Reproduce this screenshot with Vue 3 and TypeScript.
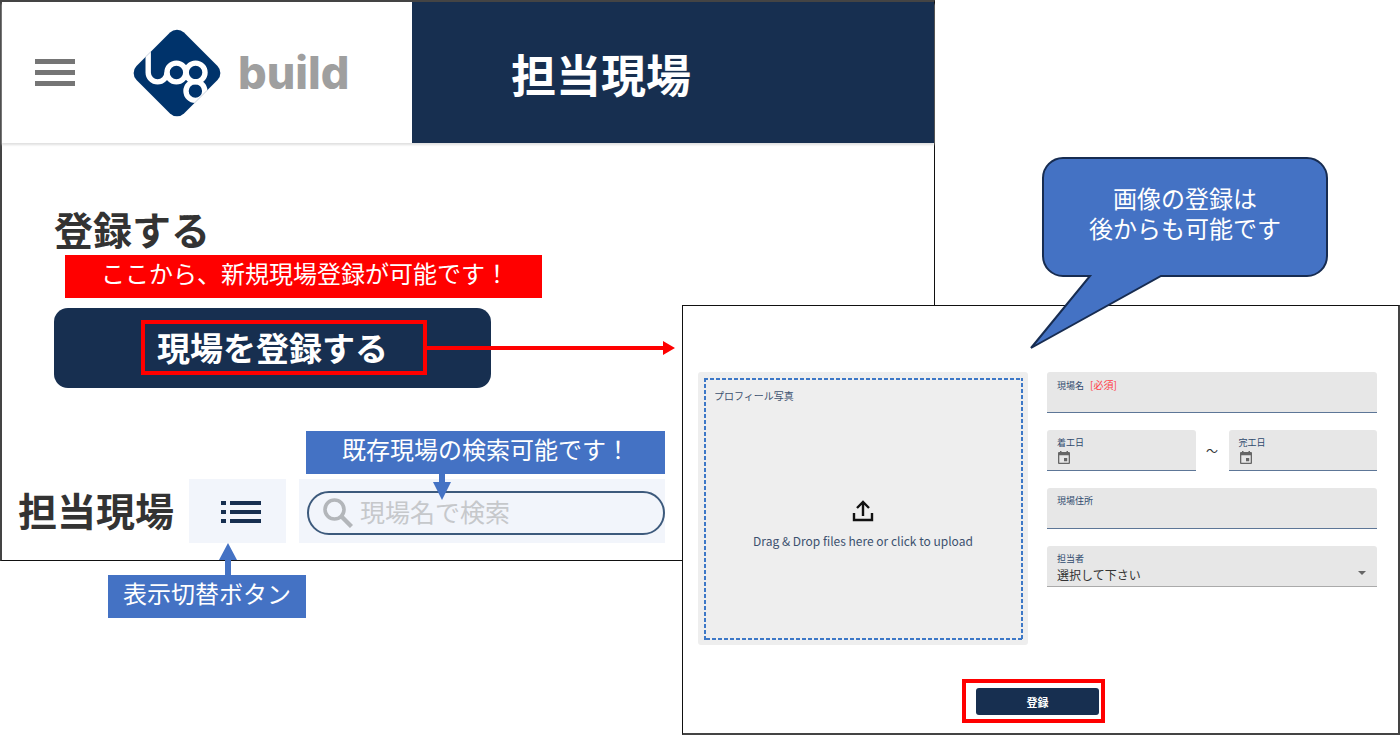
<script setup lang="ts">
import { ref } from 'vue'

const keyword = ref('')
const siteName = ref('')
const startDate = ref('')
const endDate = ref('')
const address = ref('')
const manager = ref('')
</script>

<template>
  <div class="page">
    <main class="panel sites">
      <header class="header">
        <div class="brand">
          <button class="icon-button menu" type="button" aria-label="メニュー">
            <svg width="40" height="28" viewBox="0 0 40 28" fill="#757575">
              <rect y="0" width="40" height="5" />
              <rect y="11" width="40" height="5" />
              <rect y="22" width="40" height="5" />
            </svg>
          </button>
          <a class="logo" href="#">
            <svg width="88" height="88" viewBox="0 0 88 88">
              <defs>
                <clipPath id="diamond">
                  <path d="M37 3.500a10 10 0 0 1 14 0L84.500 37a10 10 0 0 1 0 14L51 84.500a10 10 0 0 1-14 0L3.500 51a10 10 0 0 1 0-14Z" />
                </clipPath>
              </defs>
              <g clip-path="url(#diamond)">
                <rect width="88" height="88" fill="#00336b" />
                <g fill="none" stroke="#fff" stroke-width="5.400">
                  <path d="M15.200 16V43.500a9.400 9.400 0 0 0 18.800 0" />
                  <circle cx="43.400" cy="43.500" r="9.400" />
                  <circle cx="62.600" cy="43.500" r="9.400" />
                  <circle cx="62.400" cy="62" r="9.400" />
                </g>
              </g>
            </svg>
            <span class="logo-name">build</span>
          </a>
        </div>
        <h1 class="title">担当現場</h1>
      </header>

      <section class="register">
        <h2 class="heading">登録する</h2>
        <p class="note note-red">ここから、新規現場登録が可能です！</p>
        <button class="register-button" type="button">
          現場を登録する
          <span class="focus-frame"></span>
          <svg class="arrow-right" width="248" height="14" viewBox="0 0 248 14" fill="#f00">
            <path d="M0 5h236V0l12 7-12 7V9H0Z" />
          </svg>
        </button>
      </section>

      <section class="toolbar">
        <h2 class="heading">担当現場</h2>
        <div class="switcher">
          <button class="icon-button" type="button" aria-label="表示切替">
            <svg width="40" height="24" viewBox="0 0 40 24" fill="#172f50">
              <path d="M0 1h5v4H0ZM9 1h31v4H9ZM0 10h5v4H0ZM9 10h31v4H9ZM0 19h5v4H0ZM9 19h31v4H9Z" />
            </svg>
          </button>
          <div class="switcher-note">
            <svg width="18" height="32" viewBox="0 0 18 32" fill="#4472c4">
              <path d="M9 0l9 17h-6v15H6V17H0Z" />
            </svg>
            <p class="note">表示切替ボタン</p>
          </div>
        </div>
        <div class="search">
          <label class="search-box">
            <svg width="30" height="30" viewBox="0 0 30 30" fill="none" stroke="#b3b6ba">
              <circle cx="11.500" cy="11.500" r="9.500" stroke-width="3.600" />
              <path d="M18 18l10.500 10.500" stroke-width="4.400" />
            </svg>
            <input v-model="keyword" type="search" placeholder="現場名で検索" aria-label="現場名で検索" />
          </label>
          <div class="search-note">
            <p class="note">既存現場の検索可能です！</p>
            <svg width="18" height="26" viewBox="0 0 18 26" fill="#4472c4">
              <path d="M6 0h6v8h6L9 26 0 8h6Z" />
            </svg>
          </div>
        </div>
      </section>
    </main>

    <form class="panel entry" @submit.prevent>
      <aside class="bubble">
        <svg width="302" height="196" viewBox="0 0 302 196">
          <path
            d="M34 2H278a20 20 0 0 1 20 20V100a20 20 0 0 1-20 20H132L2 192L61 120H34a20 20 0 0 1-20-20V22a20 20 0 0 1 20-20Z"
            fill="#4472c4"
            stroke="#172c51"
            stroke-width="2"
          />
        </svg>
        <p class="bubble-text">画像の登録は<br />後からも可能です</p>
      </aside>

      <div class="columns">
        <label class="upload">
          <svg class="dashes" width="100%" height="100%">
            <rect width="100%" height="100%" fill="none" stroke="#3d78c7" stroke-width="4" stroke-dasharray="4 2" />
          </svg>
          <span class="upload-label">プロフィール写真</span>
          <span class="upload-hint">
            <svg width="22" height="22" viewBox="0 0 22 22" fill="none" stroke="#111" stroke-width="2.400">
              <path d="M11 16V2.500M5 8l6-6 6 6M2 13v7h18v-7" />
            </svg>
            Drag &amp; Drop files here or click to upload
          </span>
          <input class="file" type="file" />
        </label>

        <div class="fields">
          <label class="field">
            <span class="field-label">現場名 <span class="required">[必須]</span></span>
            <input v-model="siteName" type="text" />
          </label>
          <div class="dates">
            <label class="field">
              <span class="field-label">着工日</span>
              <span class="date-value">
                <svg width="12" height="13" viewBox="0 0 12 13" fill="#666">
                  <path fill-rule="evenodd" d="M2 0h1.500v1h5V0H10v1h1a1 1 0 0 1 1 1v10a1 1 0 0 1-1 1H1a1 1 0 0 1-1-1V2a1 1 0 0 1 1-1h1ZM1.300 4.300v7.400h9.400V4.300ZM6 7h3.200v3.200H6Z" />
                </svg>
                <input v-model="startDate" type="text" />
              </span>
            </label>
            <span class="tilde">～</span>
            <label class="field">
              <span class="field-label">完工日</span>
              <span class="date-value">
                <svg width="12" height="13" viewBox="0 0 12 13" fill="#666">
                  <path fill-rule="evenodd" d="M2 0h1.500v1h5V0H10v1h1a1 1 0 0 1 1 1v10a1 1 0 0 1-1 1H1a1 1 0 0 1-1-1V2a1 1 0 0 1 1-1h1ZM1.300 4.300v7.400h9.400V4.300ZM6 7h3.200v3.200H6Z" />
                </svg>
                <input v-model="endDate" type="text" />
              </span>
            </label>
          </div>
          <label class="field">
            <span class="field-label">現場住所</span>
            <input v-model="address" type="text" />
          </label>
          <label class="field select-field">
            <span class="field-label">担当者</span>
            <select v-model="manager">
              <option value="">選択して下さい</option>
            </select>
            <svg class="caret" width="8" height="4" viewBox="0 0 8 4" fill="#666"><path d="M0 0h8L4 4Z" /></svg>
          </label>
        </div>
      </div>

      <div class="actions">
        <div class="submit-frame">
          <button class="submit" type="submit">登録</button>
        </div>
      </div>
    </form>
  </div>
</template>

<style>
body {
  margin: 0;
  background: #fff;
}
</style>

<style scoped>
.page,
.page * {
  box-sizing: border-box;
}

.page {
  display: grid;
  grid-template-columns: 682fr 253fr 465fr;
  align-items: start;
  font-family: "Noto Sans CJK JP", "Noto Sans", sans-serif;
  color: #333;
}

.page svg {
  display: block;
  flex: none;
}

h1,
h2,
p {
  margin: 0;
}

button,
input,
select {
  font: inherit;
  color: inherit;
  border: 0;
  padding: 0;
  background: none;
  outline: 0;
}

input,
select {
  width: 100%;
  min-width: 0;
}

.panel {
  background: #fff;
}

.sites {
  grid-area: 1 / 1 / 2 / 3;
  border: 1px solid #111;
  border-top: 2px solid #444;
  border-left: 2px solid #444;
  padding-bottom: 17px;
}

.header {
  display: flex;
  box-shadow: 0 2px 2px #e0e0e0;
}

.brand {
  display: flex;
  align-items: center;
  width: 44%;
  padding-left: 33px;
}

.icon-button {
  display: flex;
  align-items: center;
  justify-content: center;
  cursor: pointer;
}

.logo {
  display: flex;
  align-items: center;
  gap: 17px;
  margin-left: 58px;
  text-decoration: none;
}

.logo-name {
  font: 800 45px/60px Inter, sans-serif;
  color: #9f9f9f;
}

.title {
  flex: 1;
  padding: 3px 0 0 99px;
  background: #172f50;
  color: #fff;
  font-size: 45px;
  line-height: 138px;
}

.register {
  padding: 65px 52px 0;
}

.heading {
  padding-bottom: 4px;
  font-size: 39px;
  line-height: 40px;
  white-space: nowrap;
}

.note {
  padding: 0 36px 8px;
  background: #4472c4;
  color: #fff;
  font-size: 24px;
  line-height: 35px;
  text-align: center;
  white-space: nowrap;
}

.note-red {
  width: 477px;
  margin: 3px 0 10px 11px;
  background: #f00;
}

.register-button {
  position: relative;
  display: block;
  width: 437px;
  height: 80px;
  padding-bottom: 2px;
  border-radius: 14px;
  background: #172f50;
  color: #fff;
  font-size: 33px;
  font-weight: 700;
}

.focus-frame {
  position: absolute;
  inset: 12px 64px 13px 87px;
  border: 4px solid #f00;
}

.arrow-right {
  position: absolute;
  top: 33px;
  left: 373px;
}

.toolbar {
  display: flex;
  align-items: center;
  width: 71%;
  height: 64px;
  margin-top: 91px;
  padding-left: 16px;
}

.switcher {
  position: relative;
  align-self: stretch;
  display: flex;
  justify-content: center;
  width: 97px;
  margin: 0 13px 0 15px;
  padding: 2px 0 0 6px;
  background: #f2f5fb;
}

.switcher-note {
  position: absolute;
  top: 64px;
  left: -81px;
}

.switcher-note svg {
  margin-left: 111px;
}

.switcher-note .note {
  width: 198px;
  padding: 0 0 8px;
}

.search {
  position: relative;
  align-self: stretch;
  flex: 1;
  margin-right: -1px;
  padding: 12px 0 8px 8px;
  background: #f2f5fb;
}

.search-box {
  display: flex;
  align-items: center;
  gap: 7px;
  height: 44px;
  padding: 0 14px;
  border: 2px solid #3d5a7c;
  border-radius: 22px;
}

.search-box input {
  padding-bottom: 4px;
  font-size: 25px;
  line-height: 36px;
}

.search-box input::placeholder {
  color: #c6c8cb;
  opacity: 1;
}

.search-note {
  position: absolute;
  top: -48px;
  left: 7px;
  right: 0;
}

.search-note svg {
  margin-left: 127px;
}

.entry {
  position: relative;
  grid-area: 1 / 2 / 2 / 4;
  margin-top: 305px;
  padding: 66px 21px 10px 15px;
  border: 1px solid #111;
  border-right: 2px solid #444;
  border-bottom: 2px solid #444;
}

.bubble {
  position: absolute;
  top: -150px;
  left: 346px;
}

.bubble-text {
  position: absolute;
  inset: 27px 4px auto 14px;
  color: #fff;
  font-size: 24px;
  line-height: 30px;
  text-align: center;
}

.columns {
  display: grid;
  grid-template-columns: 1fr 1fr;
  gap: 19px;
}

.upload {
  display: flex;
  flex-direction: column;
  height: 273px;
  padding: 6px;
  border-radius: 3px;
  background: #eee;
  position: relative;
  color: #3c516e;
}

.dashes {
  position: absolute;
  inset: 6px 5px 5px 6px;
  width: calc(100% - 11px);
  height: calc(100% - 11px);
}

.upload-label {
  padding: 10px 10px 8px;
  font-size: 10px;
  line-height: 16px;
}

.upload-hint {
  display: flex;
  flex-direction: column;
  align-items: center;
  gap: 10px;
  margin-top: 88px;
  font-size: 12px;
  line-height: 18px;
}

.file {
  position: absolute;
  inset: 0;
  opacity: 0;
}

.fields {
  display: flex;
  flex-direction: column;
  gap: 17px;
}

.field {
  position: relative;
  display: flex;
  flex-direction: column;
  min-height: 41px;
  padding: 6px 10px 0;
  border-bottom: 1px solid #5d7697;
  border-radius: 3px 3px 0 0;
  background: #e7e7e7;
  font-size: 12px;
}

.field-label {
  color: #2f4a6e;
  font-size: 9px;
  line-height: 14px;
}

.required {
  margin-left: 4px;
  color: #ff3b45;
  font-size: 10px;
}

.field > input,
.date-value input,
.field select {
  height: 18px;
  line-height: 18px;
}

.dates {
  display: grid;
  grid-template-columns: 1fr 33px 1fr;
  align-items: center;
}

.tilde {
  font-size: 12px;
  text-align: center;
}

.date-value {
  display: flex;
  align-items: center;
  gap: 4px;
  height: 14px;
  padding-left: 1px;
}

.select-field {
  border-bottom-color: #aaa;
}

.field select {
  appearance: none;
}

.caret {
  position: absolute;
  right: 11px;
  bottom: 11px;
}

.actions {
  display: flex;
  justify-content: center;
  margin-top: 34px;
  padding-right: 8px;
}

.submit-frame {
  padding: 5px 2px 4px 10px;
  border: 4px solid #f00;
}

.submit {
  display: block;
  width: 123px;
  height: 27px;
  border-radius: 3px;
  background: #172f50;
  color: #fff;
  font-size: 11px;
  font-weight: 700;
}
</style>
